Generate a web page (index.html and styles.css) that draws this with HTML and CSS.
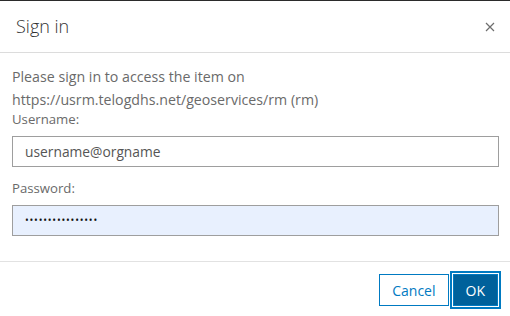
FILE: index.html
```html
<!DOCTYPE html>
<html>
<head>
<meta charset="utf-8">
<link rel="stylesheet" href="styles.css">
</head>
<body>
<div class="dialog">
  <div class="header">
    <div class="title">Sign in</div>
    <button class="close" aria-label="Close">
      <svg width="10" height="10" viewBox="0 0 10 10"><path d="M1 1L9 9M9 1L1 9" stroke="#6e6e6e" stroke-width="1.2" fill="none"/></svg>
    </button>
  </div>
  <div class="content">
    <div class="info">Please sign in to access the item on https://usrm.telogdhs.net/geoservices/rm (rm)</div>
    <label class="label">Username:</label>
    <div class="input">username@orgname</div>
    <label class="label pw">Password:</label>
    <div class="input filled">••••••••••••••••</div>
  </div>
  <div class="footer">
    <button class="btn cancel">Cancel</button>
    <button class="btn ok">OK</button>
  </div>
</div>
</body>
</html>
```
FILE: styles.css
```css
html, body {
  margin: 0;
  padding: 0;
  background: #fff;
}
body {
  font-family: "Open Sans", "Noto Sans", sans-serif;
  color: #4a4a4a;
  width: 510px;
  height: 316px;
  overflow: hidden;
}
.dialog {
  border-top: 1px solid #2b2b2b;
  height: 315px;
  display: flex;
  flex-direction: column;
}
.header {
  height: 51px;
  border-bottom: 1px solid #dcdcdc;
  display: flex;
  align-items: center;
  justify-content: space-between;
  padding: 0 14px 0 16px;
}
.title {
  font-size: 18px;
  font-weight: 300;
  color: #323232;
  padding-bottom: 2px;
}
.close {
  border: 0;
  background: none;
  padding: 0;
  width: 12px;
  height: 12px;
  display: flex;
  align-items: center;
  justify-content: center;
}
.content {
  padding: 12px 11px 0 12px;
  height: 196px;
  border-bottom: 1px solid #e2e2e2;
}
.info {
  font-size: 14.2px;
  line-height: 23px;
  color: #6a6a6a;
}
.label {
  display: block;
  font-size: 13.2px;
  line-height: 16px;
  color: #6a6a6a;
}
.label.pw {
  margin-top: 13px;
  margin-bottom: 9px;
}
.input {
  margin-top: 9px;
  height: 29px;
  border: 1px solid #9e9e9e;
  box-sizing: content-box;
  padding: 0 12px;
  font-size: 13.8px;
  line-height: 29px;
  color: #555;
}
.input.filled {
  margin-top: 0;
  background: #e8f0fe;
  font-size: 10px;
  letter-spacing: 0.8px;
  color: #111;
}
.footer {
  display: flex;
  justify-content: flex-end;
  align-items: center;
  gap: 4px;
  padding: 12px 12px 0 0;
}
.btn {
  font-family: "Open Sans", "Noto Sans", sans-serif;
  font-size: 14px;
  height: 32px;
  padding: 0 12px;
  border: 1px solid #007ac2;
}
.cancel {
  background: #fff;
  color: #007ac2;
}
.ok {
  background: #00619b;
  color: #fff;
  outline: 2px solid #007ac2;
  outline-offset: 1px;
  padding: 0 12px;
}
```
